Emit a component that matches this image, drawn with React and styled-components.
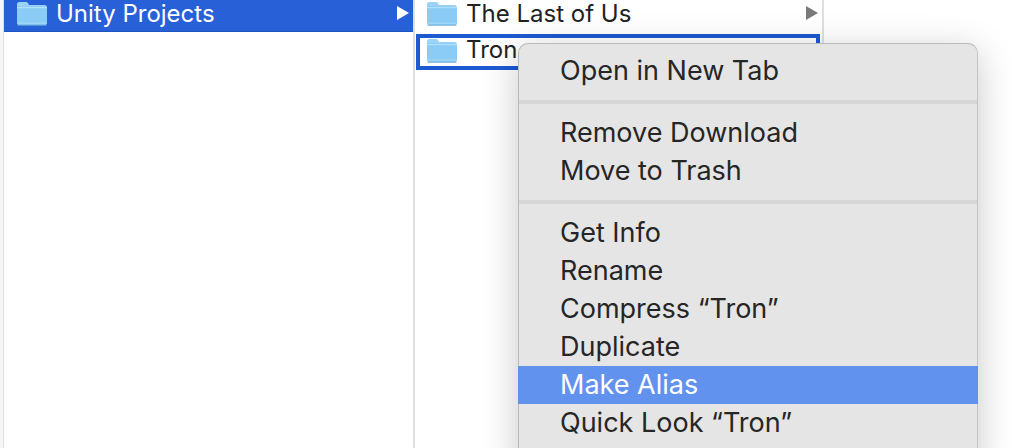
import React from 'react';
import styled, { createGlobalStyle } from 'styled-components';

const Global = createGlobalStyle`
  html, body {
    margin: 0;
    padding: 0;
    background: #fff;
  }
  body {
    font-family: Inter, "Noto Sans", sans-serif;
    -webkit-font-smoothing: antialiased;
  }
`;

const Window = styled.div`
  position: relative;
  width: 1012px;
  height: 448px;
  box-sizing: border-box;
  border-left: 3px solid #f6f6f6;
  overflow: hidden;
  display: flex;
  background: #fff;
`;

const Column = styled.div`
  flex: 0 0 ${(p) => p.$width}px;
  height: 100%;
  box-sizing: border-box;
  border-left: ${(p) => p.$leftRule || 0}px solid #dfdfdf;
  border-right: ${(p) => p.$rightRule || 0}px solid #dfdfdf;
`;

const List = styled.div`
  display: flex;
  flex-direction: column;
`;

const Row = styled.div`
  height: 32px;
  box-sizing: border-box;
  display: flex;
  align-items: center;
  padding: 0 3px 6px ${(p) => p.$indent}px;
  gap: 8px;
  font-size: 24px;
  color: ${(p) => (p.$active ? '#fff' : '#222')};
  background: ${(p) => (p.$active ? '#2860d8' : 'transparent')};
  box-shadow: ${(p) => (p.$active ? 'inset 0 -1px 0 #1f54c4' : 'none')};
`;

const FocusRow = styled(Row)`
  height: 36px;
  margin: 2px 2px 0 1px;
  padding: 0 0 5px 6px;
  border: 4px solid #1d59d1;
`;

const RowLabel = styled.span`
  flex: 1;
  white-space: nowrap;
`;

const Menu = styled.div`
  position: absolute;
  left: 515px;
  top: 43px;
  width: 460px;
  height: 430px;
  box-sizing: border-box;
  padding-top: 8px;
  background: #e5e5e5;
  border: 1px solid #b9b9b9;
  border-right-color: #c4c4c4;
  border-radius: 10px;
  box-shadow: 0 8px 36px rgba(0, 0, 0, 0.22);
  display: flex;
  flex-direction: column;
`;

const MenuItem = styled.div`
  flex: 0 0 38px;
  box-sizing: border-box;
  margin: 0 -1px;
  padding: 0 0 1px 42px;
  display: flex;
  align-items: center;
  font-size: 27px;
  white-space: nowrap;
  color: ${(p) => (p.$active ? '#fff' : '#262626')};
  background: ${(p) => (p.$active ? '#6092ee' : 'transparent')};
`;

const Separator = styled.div`
  flex: 0 0 4px;
  margin: 10px 0;
  background: #d6d6d6;
`;

const FolderIcon = () => (
  <svg width="32" height="26" viewBox="0 0 32 26" style={{ flexShrink: 0 }}>
    <path d="M1 4.5C1 2.8 2 2 3.4 2h6.2c1.2 0 1.9.5 2.6 1.4L13 5h15.6C30 5 31 6 31 7.4v15.2c0 1.4-1 2.4-2.4 2.4H3.4C2 25 1 24 1 22.6z" fill="#9ad3f7" />
    <path d="M1 8.2C1 7 2 6.2 3.2 6.2h25.6C30 6.2 31 7 31 8.2v14.4c0 1.4-1 2.4-2.4 2.4H3.4C2 25 1 24 1 22.6z" fill="#8accf5" />
    <rect x="1" y="7" width="30" height="1.2" fill="#b2e0fa" />
    <rect x="1.5" y="22.6" width="29" height="1" fill="#a9dbf8" />
    <path d="M1.5 25.2h29" stroke="#6ba7d4" strokeWidth="1" />
  </svg>
);

const Arrow = ({ color }) => (
  <svg width="14" height="16" viewBox="0 0 14 16" style={{ flexShrink: 0 }}>
    <polygon points="1,1 13,8 1,15" fill={color} />
  </svg>
);

const menuGroups = [
  ['Open in New Tab'],
  ['Remove Download', 'Move to Trash'],
  ['Get Info', 'Rename', 'Compress “Tron”', 'Duplicate', 'Make Alias', 'Quick Look “Tron”'],
];

export default function App() {
  return (
    <Window>
      <Global />
      <Column $width={412} $leftRule={1} $rightRule={2}>
        <List>
          <Row $active $indent={12}>
            <FolderIcon />
            <RowLabel>Unity Projects</RowLabel>
            <Arrow color="#fff" />
          </Row>
        </List>
      </Column>
      <Column $width={409} $rightRule={2}>
        <List>
          <Row $indent={11}>
            <FolderIcon />
            <RowLabel>The Last of Us</RowLabel>
            <Arrow color="#7a7a7a" />
          </Row>
          <FocusRow $indent={6}>
            <FolderIcon />
            <RowLabel>Tron</RowLabel>
            <Arrow color="#7a7a7a" />
          </FocusRow>
        </List>
      </Column>
      <Menu>
        {menuGroups.map((group, i) => (
          <React.Fragment key={group[0]}>
            {i > 0 && <Separator />}
            {group.map((item) => (
              <MenuItem key={item} $active={item === 'Make Alias'}>
                {item}
              </MenuItem>
            ))}
          </React.Fragment>
        ))}
      </Menu>
    </Window>
  );
}
